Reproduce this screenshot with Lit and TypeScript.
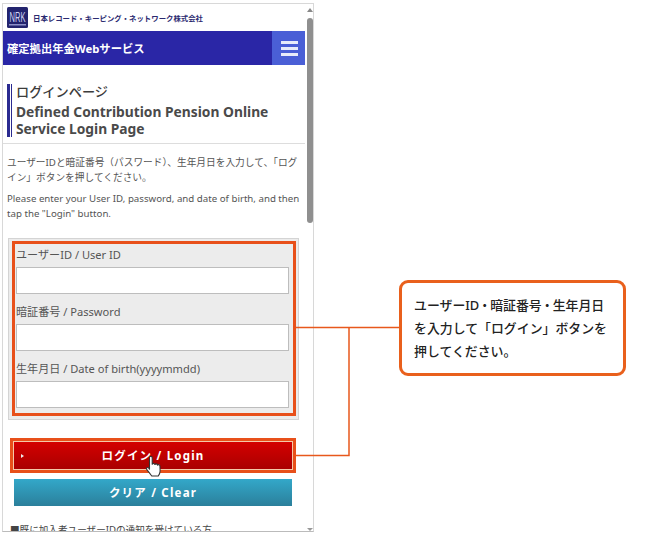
import { LitElement, html, css } from "lit";
import { customElement } from "lit/decorators.js";

const FONT = `"Liberation Sans", sans-serif`;

@customElement("app-root")
export class AppRoot extends LitElement {
  static styles = css`
    :host {
      display: block;
      position: relative;
      width: 650px;
      height: 540px;
      background: #fff;
      font-family: "Noto Sans", "Noto Sans CJK JP", sans-serif;
      overflow: hidden;
    }
    .phone {
      position: absolute;
      left: 2px;
      top: 3px;
      width: 312px;
      height: 529px;
      box-sizing: border-box;
      border: 1px solid #d8d8d8;
      border-bottom-color: #bbb;
      display: flex;
      overflow: hidden;
    }
    .page {
      width: 302px;
      flex: none;
      display: flex;
      flex-direction: column;
    }
    .page > * {
      flex: none;
    }
    .scroll {
      width: 6px;
      flex: none;
      margin-left: 2px;
      position: relative;
      background: #fff;
    }
    .thumb {
      position: absolute;
      left: 0;
      right: 0;
      top: 14px;
      height: 205px;
      background: #8f8f8f;
      border-radius: 3px;
    }
    .arrow {
      position: absolute;
      left: 0;
      width: 0;
      height: 0;
      border-left: 3px solid transparent;
      border-right: 3px solid transparent;
    }
    .arrow.up {
      top: 4px;
      border-bottom: 4px solid #888;
    }
    .arrow.down {
      bottom: 0;
      border-top: 3px solid #999;
    }
    .brand {
      height: 27px;
      display: flex;
      align-items: center;
      gap: 5px;
      padding-left: 4px;
    }
    .brand svg {
      display: block;
    }
    .brand span {
      font-size: 7.4px;
      font-weight: 700;
      color: #2b2a70;
      white-space: nowrap;
    }
    .nav {
      height: 34px;
      background: #2a26a6;
      display: flex;
      align-items: center;
      justify-content: space-between;
      color: #fff;
    }
    .nav .name {
      font-size: 11.3px;
      font-weight: 700;
      padding-left: 4px;
      white-space: nowrap;
    }
    .menu {
      width: 33px;
      height: 100%;
      box-sizing: border-box;
      padding-left: 2px;
      background: #4a5fd6;
      display: flex;
      flex-direction: column;
      justify-content: center;
      align-items: center;
      gap: 3px;
    }
    .menu i {
      display: block;
      width: 17px;
      height: 3px;
      background: #e8ecfa;
    }
    .title {
      margin: 19px 0 0 4px;
      padding: 0 0 0 9px;
      height: 53px;
      box-sizing: border-box;
      color: #4a4a4a;
      background: linear-gradient(
        90deg,
        #2a2a90 3px,
        transparent 3px,
        transparent 4px,
        #2a2a90 4px,
        #2a2a90 5px,
        transparent 5px
      );
    }
    .title .ja {
      font-size: 13.2px;
      line-height: 17px;
      font-weight: 500;
      color: #3c3c3c;
    }
    .title .en {
      font-size: 13.8px;
      line-height: 17px;
      font-weight: 700;
      margin-top: 2px;
    }
    .rule {
      height: 1px;
      background: #ddd;
      margin-top: 6px;
    }
    .copy {
      margin: 11px 4px 0 4px;
      font-size: 9.7px;
      line-height: 15px;
      color: #555;
    }
    .copy p {
      margin: 0 0 6px;
    }
    .form {
      margin: 11px 0 0 5px;
      width: 291px;
      height: 182px;
      box-sizing: border-box;
      background: #ececec;
      border: 1px solid #d4d4d4;
      padding: 8px 9px 0 7px;
    }
    .field label {
      display: block;
      font-size: 11.1px;
      line-height: 16px;
      color: #555;
      margin-bottom: 4px;
    }
    .field {
      margin-bottom: 10px;
    }
    .field input {
      display: block;
      width: 100%;
      height: 27px;
      box-sizing: border-box;
      border: 1px solid #bdbdbd;
      background: #fff;
      padding: 0;
      margin: 0;
    }
    .btn {
      display: flex;
      align-items: center;
      justify-content: center;
      position: relative;
      margin-left: 11px;
      width: 278px;
      border: none;
      color: #fff;
      font-family: inherit;
      font-size: 11.5px;
      font-weight: 700;
      letter-spacing: 1.2px;
      padding: 0 0 2px;
    }
    .login {
      height: 28px;
      margin-top: 22px;
      background: linear-gradient(#d40000, #a80000);
    }
    .login::before {
      content: "";
      position: absolute;
      left: 7px;
      top: 12px;
      border-left: 3px solid #eee;
      border-top: 2.5px solid transparent;
      border-bottom: 2.5px solid transparent;
    }
    .clear {
      height: 27px;
      margin-top: 9px;
      background: linear-gradient(#33a8c9, #2b7f9b);
    }
    .note {
      margin: 17px 0 0 7px;
      font-size: 9.6px;
      line-height: 14px;
      color: #444;
      white-space: nowrap;
    }
    .mark {
      position: absolute;
      box-sizing: border-box;
      border: 3px solid #e8501a;
      pointer-events: none;
    }
    .mark.fields {
      left: 12px;
      top: 241px;
      width: 284px;
      height: 175px;
    }
    .mark.button {
      left: 10px;
      top: 438px;
      width: 286px;
      height: 35px;
      outline: 1px solid #f5c9a8;
      outline-offset: -4px;
    }
    .wire {
      position: absolute;
      left: 0;
      top: 0;
      pointer-events: none;
    }
    .callout {
      position: absolute;
      left: 399px;
      top: 280px;
      width: 227px;
      height: 96px;
      box-sizing: border-box;
      border: 3px solid #e9601c;
      border-radius: 9px;
      background: #fff;
      padding: 11px 0 0 12px;
      font-size: 12.9px;
      line-height: 23px;
      font-weight: 500;
      color: #222;
      white-space: nowrap;
    }
    .callout b {
      font-weight: inherit;
      margin: 0 -1px;
    }
    .hand {
      position: absolute;
      left: 145px;
      top: 455px;
    }
  `;

  render() {
    return html`
      <div class="phone">
        <div class="page">
          <div class="brand">
            <svg width="21" height="21" viewBox="0 0 21 21">
              <rect width="21" height="21" rx="1.500" fill="#23246e" />
              <text
                transform="translate(10.500 15) scale(0.5 1)"
                text-anchor="middle"
                font-size="15"
                fill="#cfd3f2"
                font-family=${FONT}
              >NRK</text>
              <rect x="2" y="17" width="17" height="1.500" fill="#8d90c8" />
            </svg>
            <span>日本レコード・キーピング・ネットワーク株式会社</span>
          </div>
          <div class="nav">
            <div class="name">確定拠出年金Webサービス</div>
            <div class="menu"><i></i><i></i><i></i></div>
          </div>
          <div class="title">
            <div class="ja">ログインページ</div>
            <div class="en">Defined Contribution Pension Online Service Login Page</div>
          </div>
          <div class="rule"></div>
          <div class="copy">
            <p>ユーザーIDと暗証番号（パスワード）、生年月日を入力して、「ログイン」ボタンを押してください。</p>
            <p>Please enter your User ID, password, and date of birth, and then tap the "Login" button.</p>
          </div>
          <div class="form">
            <div class="field">
              <label>ユーザーID / User ID</label>
              <input type="text" />
            </div>
            <div class="field">
              <label>暗証番号 / Password</label>
              <input type="password" />
            </div>
            <div class="field">
              <label>生年月日 / Date of birth(yyyymmdd)</label>
              <input type="text" />
            </div>
          </div>
          <button class="btn login">ログイン / Login</button>
          <button class="btn clear">クリア / Clear</button>
          <div class="note">■既に加入者ユーザーIDの通知を受けている方</div>
        </div>
        <div class="scroll">
          <div class="arrow up"></div>
          <div class="thumb"></div>
          <div class="arrow down"></div>
        </div>
      </div>

      <div class="mark fields"></div>
      <div class="mark button"></div>
      <svg class="wire" width="650" height="540">
        <path d="M296 327.500H399M349 327.500V455.500H296" fill="none" stroke="#e8581c" stroke-width="1.500" />
      </svg>
      <div class="callout">ユーザーID<b>・</b>暗証番号<b>・</b>生年月日<br />を入力して「ログイン」ボタンを<br />押してください。</div>
      <svg class="hand" width="18" height="24" viewBox="0 0 20 26">
        <path
          d="M5 2.500c0-1.800 3-1.800 3 0V10c.4-1.400 2.800-1.300 3 .3.5-1.200 2.700-1 2.900.6.7-1 2.600-.6 2.700 1l.2 5.600c0 2.400-1 4-2 5.500H7.500c-1.500-2-3-4-5.500-7-1.200-1.600.6-3 2-2L5 15.500z"
          fill="#fff"
          stroke="#333"
          stroke-width="1.200"
          stroke-linejoin="round"
        />
      </svg>
    `;
  }
}
